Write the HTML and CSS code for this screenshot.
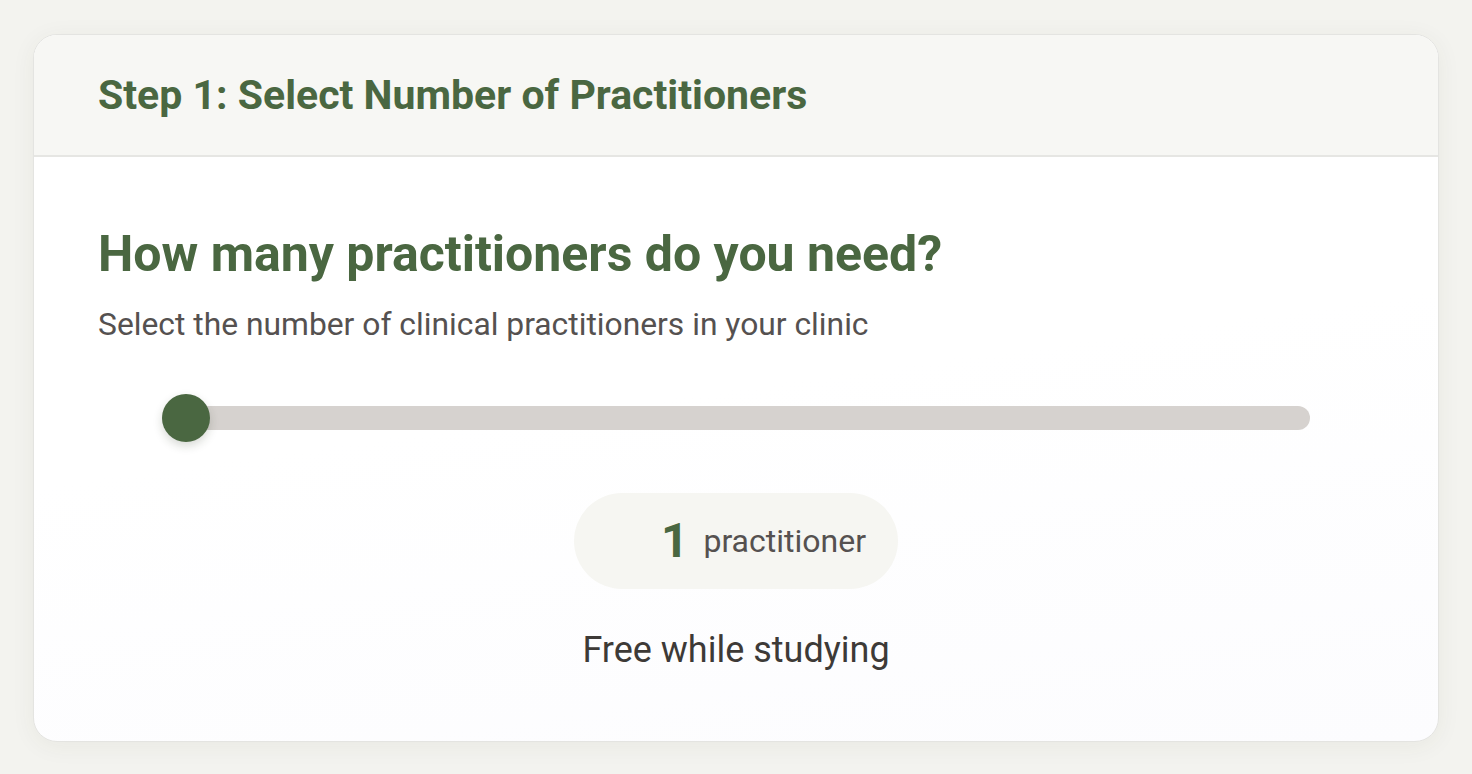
FILE: index.html
```html
<!DOCTYPE html>
<html lang="en">
<head>
<meta charset="utf-8">
<title>Select Practitioners</title>
<link rel="stylesheet" href="styles.css">
</head>
<body>
<main class="page">
  <section class="card">
    <header class="card-header">
      <h2 class="step-title">Step 1: Select Number of Practitioners</h2>
    </header>
    <div class="card-body">
      <h1 class="question">How many practitioners do you need?</h1>
      <p class="hint">Select the number of clinical practitioners in your clinic</p>
      <div class="slider">
        <div class="track"></div>
        <div class="thumb"></div>
      </div>
      <div class="count-wrap">
        <div class="count-pill">
          <span class="count-num">1</span>
          <span class="count-label">practitioner</span>
        </div>
      </div>
      <p class="price">Free while studying</p>
    </div>
  </section>
</main>
</body>
</html>
```
FILE: styles.css
```css
* { box-sizing: border-box; }
html, body { margin: 0; padding: 0; }
body {
  background: #f3f3ef;
  font-family: Roboto, "Noto Sans", "Liberation Sans", sans-serif;
  width: 1472px;
  height: 774px;
  overflow: hidden;
}
.page {
  padding: 34px 33px 0 33px;
}
.card {
  width: 1406px;
  height: 708px;
  background: linear-gradient(172deg, #ffffff 50%, #fcfcfe 100%);
  border: 1.5px solid #e4e4e1;
  border-radius: 24px;
  overflow: hidden;
  box-shadow: 0 4px 24px rgba(60, 60, 40, 0.06);
  display: flex;
  flex-direction: column;
}
.card-header {
  background: #f7f7f4;
  border-bottom: 2px solid #e6e6e3;
  height: 122px;
  flex: none;
  padding: 0 64px;
  display: flex;
  align-items: center;
}
.step-title {
  margin: 0;
  font-size: 41px;
  font-weight: 700;
  color: #4a6741;
  line-height: 48px;
}
.card-body {
  padding: 68px 64px 0 64px;
}
.question {
  margin: 0;
  font-size: 50px;
  font-weight: 700;
  color: #4a6741;
  line-height: 58px;
}
.hint {
  margin: 21px 0 0 0;
  font-size: 31.8px;
  line-height: 40px;
  color: #555150;
}
.slider {
  position: relative;
  margin: 50px 64px 0 64px;
  height: 48px;
  display: flex;
  align-items: center;
}
.track {
  flex: 1;
  height: 24px;
  background: #d6d2cf;
  border-radius: 12px;
}
.thumb {
  position: absolute;
  left: 0;
  top: 0;
  width: 48px;
  height: 48px;
  border-radius: 50%;
  background: #4a6741;
  box-shadow: 0 4px 10px rgba(40, 50, 30, 0.18);
}
.count-wrap {
  display: flex;
  justify-content: center;
  margin-top: 51px;
}
.count-pill {
  width: 324px;
  height: 96px;
  border-radius: 48px;
  background: #f6f6f2;
  display: flex;
  align-items: center;
  justify-content: flex-end;
  padding-right: 32px;
  gap: 15px;
}
.count-num {
  font-size: 48px;
  font-weight: 700;
  color: #4a6741;
  line-height: 56px;
}
.count-label {
  font-size: 32px;
  line-height: 40px;
  color: #555150;
}
.price {
  margin: 39px 0 0 0;
  text-align: center;
  font-size: 36px;
  line-height: 44px;
  color: #3d3a37;
}
```
